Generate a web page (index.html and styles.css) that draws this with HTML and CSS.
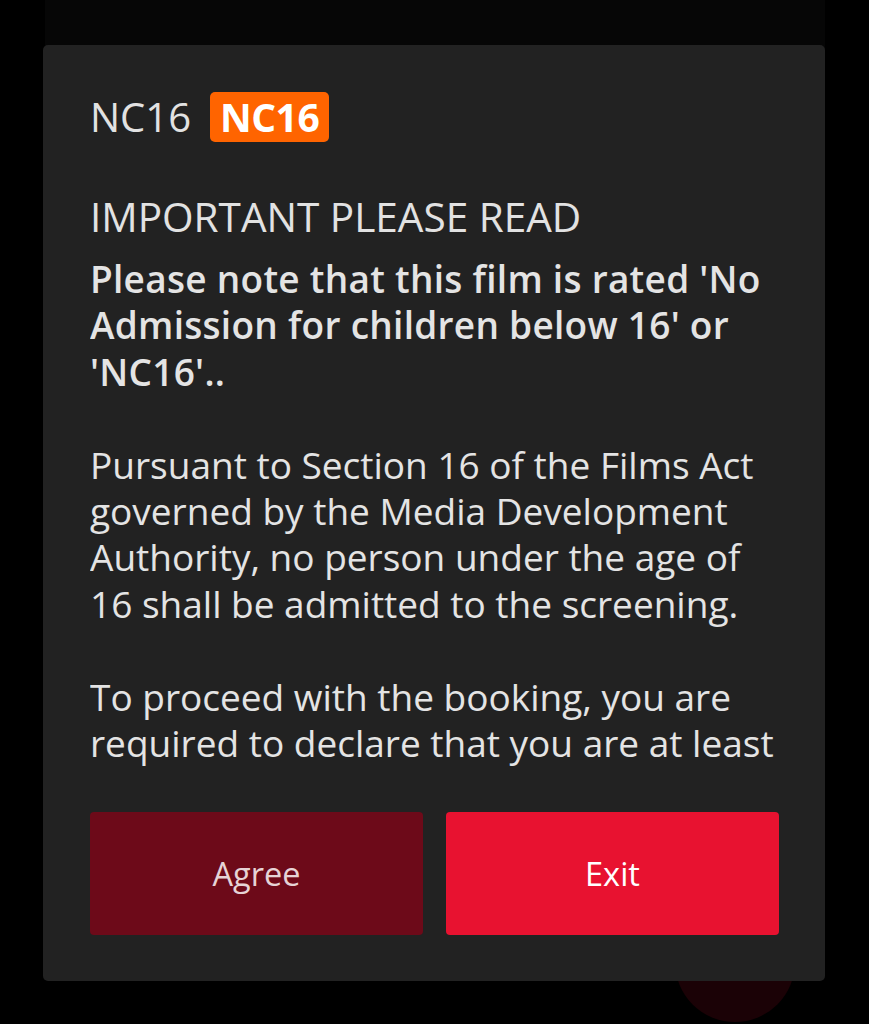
FILE: index.html
```html
<!DOCTYPE html>
<html lang="en">
<head>
<meta charset="utf-8">
<title>NC16 notice</title>
<link rel="stylesheet" href="styles.css">
</head>
<body>
<div class="page">
  <div class="under-card"></div>
  <div class="fab"></div>
  <div class="modal" role="dialog">
    <div class="scroll">
      <div class="rating-row">
        <span class="rating-label">NC16</span>
        <span class="rating-badge">NC16</span>
      </div>
      <h2 class="title">IMPORTANT PLEASE READ</h2>
      <p class="lead">Please note that this film is rated 'No Admission for children below 16' or 'NC16'..</p>
      <p class="para">Pursuant to Section 16 of the Films Act governed by the Media Development Authority, no person under the age of 16 shall be admitted to the screening.</p>
      <p class="para">To proceed with the booking, you are required to declare that you are at least</p>
    </div>
    <div class="actions">
      <button class="btn btn-agree">Agree</button>
      <button class="btn btn-exit">Exit</button>
    </div>
  </div>
</div>
</body>
</html>
```
FILE: styles.css
```css
* { box-sizing: border-box; }
html, body { margin: 0; padding: 0; background: #000; }
body { font-family: "Open Sans", "Noto Sans", sans-serif; }
.page {
  position: relative;
  width: 869px;
  height: 1024px;
  overflow: hidden;
  background: #000;
}
.under-card {
  margin: 0 44px 0 45px;
  height: 60px;
  background: #060606;
}
.fab {
  position: absolute;
  left: 675px;
  top: 902px;
  width: 120px;
  height: 120px;
  border-radius: 50%;
  background: #1b0206;
}
.modal {
  position: absolute;
  left: 43px;
  top: 45px;
  width: 782px;
  height: 936px;
  background: #222222;
  border-radius: 5px;
  padding: 37px 46px 46px 47px;
  display: flex;
  flex-direction: column;
}
.scroll {
  height: 691px;
  padding-top: 10px;
  overflow: hidden;
  color: #e4e4e4;
}
.rating-row {
  display: flex;
  align-items: center;
  gap: 19px;
  height: 50px;
}
.rating-label {
  font-size: 40px;
  line-height: 50px;
  color: #e2e2e2;
}
.rating-badge {
  background: #ff6400;
  color: #fff;
  font-weight: 700;
  font-size: 39px;
  line-height: 50px;
  height: 50px;
  padding: 0 10px;
  border-radius: 5px;
  letter-spacing: -0.5px;
}
.title {
  margin: 52px 0 0;
  font-weight: 400;
  font-size: 40.5px;
  line-height: 46px;
  color: #e2e2e2;
}
.lead, .para {
  margin: 0;
  font-size: 37px;
  line-height: 46.4px;
}
.lead { font-weight: 600; margin-top: 16px; letter-spacing: 0.28px; }
.para { font-weight: 400; margin-top: 46.4px; }
.actions {
  margin-top: auto;
  display: grid;
  grid-template-columns: 1fr 1fr;
  gap: 23px;
  height: 123px;
}
.btn {
  border: 0;
  border-radius: 4px;
  font-family: inherit;
  font-size: 32.5px;
  line-height: 40px;
  height: 123px;
  padding: 0;
  display: flex;
  align-items: center;
  justify-content: center;
}
.btn-agree { background: #6d0a19; color: #e6d3d6; }
.btn-exit { background: #e81230; color: #fff; }
```
